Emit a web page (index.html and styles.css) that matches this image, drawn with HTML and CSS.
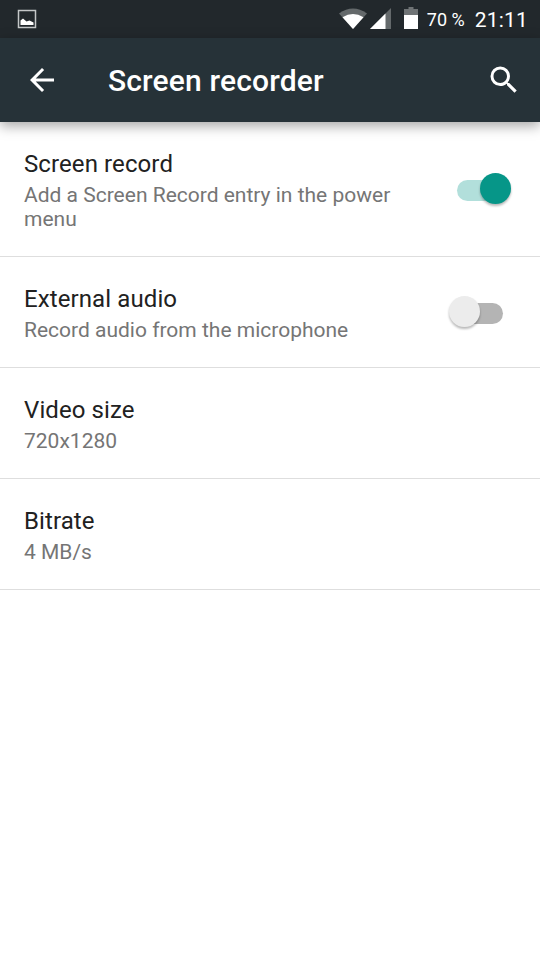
FILE: index.html
```html
<!DOCTYPE html>
<html lang="en">
<head>
    <meta charset="UTF-8">
    <meta name="viewport" content="width=device-width, initial-scale=1.0">
    <title>Screen recorder</title>
    <link rel="stylesheet" href="styles.css">
</head>
<body>
    <div class="status-bar">
        <svg class="picture-icon" width="20" height="20" viewBox="0 0 20 20">
            <rect x="1.5" y="1.5" width="17" height="17" fill="none" stroke="#c4c7c8" stroke-width="1.5"/>
            <path d="M3.5 16V11.5L6 9.5L9.5 12.5L12.5 11.5L16.5 13.5V16Z" fill="#fff"/>
        </svg>
        <div class="status-right">
            <svg class="wifi-icon" width="28" height="22" viewBox="0 0 28 22">
                <path d="M0 5.5Q14 -4.5 28 5.5L14 21Z" fill="#64696b"/>
                <path d="M3.5 9.3Q14 2.5 24.5 9.3L14 21Z" fill="#fff"/>
            </svg>
            <svg class="signal-icon" width="21" height="21" viewBox="0 0 21 21">
                <path d="M21 0V21H0Z" fill="#64696b"/>
                <path d="M15.5 5.5V21H0Z" fill="#fff"/>
            </svg>
            <svg class="battery-icon" width="14" height="22" viewBox="0 0 14 22">
                <path d="M0 2H4.5V0H9.5V2H14V8H0Z" fill="#6f7375"/>
                <rect y="8" width="14" height="14" fill="#fff"/>
            </svg>
            <span class="battery-level">70 %</span>
            <span class="clock">21:11</span>
        </div>
    </div>

    <header class="toolbar">
        <svg class="back-icon" width="36" height="36" viewBox="0 0 24 24">
            <path d="M20 11H7.83l5.59-5.59L12 4l-8 8 8 8 1.41-1.41L7.83 13H20v-2z" fill="#fff"/>
        </svg>
        <h1 class="toolbar-title">Screen recorder</h1>
        <svg class="search-icon" width="36" height="36" viewBox="0 0 24 24">
            <path d="M15.5 14h-.79l-.28-.27A6.471 6.471 0 0 0 16 9.5 6.5 6.5 0 1 0 9.5 16c1.61 0 3.09-.59 4.23-1.57l.27.28v.79l5 4.99L20.49 19l-4.99-5zm-6 0C7.01 14 5 11.99 5 9.5S7.01 5 9.5 5 14 7.01 14 9.5 11.99 14 9.5 14z" fill="#fff"/>
        </svg>
    </header>

    <main class="settings">
        <div class="setting">
            <div class="setting-text">
                <div class="setting-title">Screen record</div>
                <div class="setting-summary">Add a Screen Record entry in the power menu</div>
            </div>
            <svg class="switch" width="72" height="48" viewBox="0 0 72 48">
                <rect x="13" y="15" width="46" height="21" rx="10.5" fill="#b2dfdb"/>
                <circle class="thumb" cx="51.5" cy="23.5" r="15.5" fill="#069688"/>
            </svg>
        </div>
        <div class="setting">
            <div class="setting-text">
                <div class="setting-title">External audio</div>
                <div class="setting-summary">Record audio from the microphone</div>
            </div>
            <svg class="switch" width="72" height="48" viewBox="0 0 72 48">
                <rect x="13" y="15" width="46" height="21" rx="10.5" fill="#b4b4b4"/>
                <circle class="thumb" cx="20.5" cy="23.5" r="15.5" fill="#ececec"/>
            </svg>
        </div>
        <div class="setting">
            <div class="setting-text">
                <div class="setting-title">Video size</div>
                <div class="setting-summary">720x1280</div>
            </div>
        </div>
        <div class="setting">
            <div class="setting-text">
                <div class="setting-title">Bitrate</div>
                <div class="setting-summary">4 MB/s</div>
            </div>
        </div>
    </main>
</body>
</html>
```
FILE: styles.css
```css
* {
    box-sizing: border-box;
}
body {
    margin: 0;
    min-height: 100vh;
    font-family: Roboto, sans-serif;
    background-color: #fff;
}
svg {
    display: block;
    flex: none;
}
.status-bar {
    display: flex;
    justify-content: space-between;
    height: 38px;
    padding: 0 12px 0 17px;
    background-color: #22282c;
    color: #fff;
}
.picture-icon {
    margin-top: 9px;
}
.status-right {
    display: flex;
    white-space: nowrap;
}
.wifi-icon {
    margin-top: 8px;
}
.signal-icon {
    margin: 8px 0 0 3px;
}
.battery-icon {
    margin: 7px 0 0 13px;
}
.battery-level {
    margin-left: 9px;
    font-size: 18px;
    line-height: 40px;
}
.clock {
    margin-left: 10px;
    font-size: 21px;
    line-height: 41px;
    letter-spacing: 0.2px;
}
.toolbar {
    display: flex;
    align-items: center;
    height: 84px;
    padding: 0 18px 0 24px;
    background-color: #263238;
    color: #fff;
    box-shadow: 0 4px 12px rgba(0, 0, 0, 0.35);
}
.toolbar-title {
    flex: 1;
    margin: 0 0 0 48px;
    padding-top: 2px;
    font-size: 30px;
    font-weight: 500;
    line-height: 36px;
    letter-spacing: 0.15px;
}
.setting {
    display: flex;
    align-items: center;
    justify-content: space-between;
    padding: 0 24px;
    border-bottom: 1px solid #dedede;
}
.setting-text {
    width: 396px;
    padding: 28px 0 25px;
}
.setting-title {
    margin-bottom: 5px;
    font-size: 24px;
    line-height: 28px;
    letter-spacing: 0.1px;
    color: #212121;
}
.setting-summary {
    font-size: 21px;
    line-height: 24px;
    color: #757575;
}
.thumb {
    filter: drop-shadow(0 2px 1px rgba(0, 0, 0, 0.28));
}
```
